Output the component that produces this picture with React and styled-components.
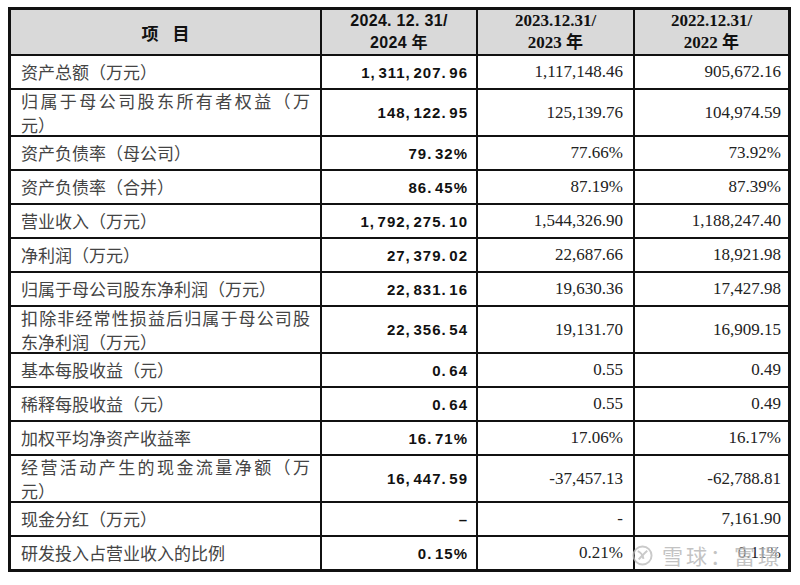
import React from 'react'
import styled, { createGlobalStyle } from 'styled-components'

const GlobalStyle = createGlobalStyle`
  html, body {
    margin: 0;
    padding: 0;
    background: #fff;
  }
`

const Page = styled.div`
  position: relative;
  width: 800px;
  height: 585px;
  padding: 7px 0 0 8px;
  box-sizing: border-box;
  overflow: hidden;
  background: #fff;
`

const Grid = styled.div`
  display: grid;
  width: 783px;
  box-sizing: border-box;
  grid-template-columns: 309px 154px 155px 153px;
  gap: 2px;
  background: #111;
  border: 3px solid #111;
`

const Cell = styled.div`
  display: flex;
  align-items: center;
  justify-content: ${p => p.align || 'flex-start'};
  box-sizing: border-box;
  height: ${p => p.head ? 44 : p.tall ? 45 : 32}px;
  padding: 0 ${p => p.pr || 10}px 0 10px;
  background: ${p => p.head ? '#d9d9d9' : '#fff'};
`

const Label = styled.div`
  width: 100%;
  font-family: "Noto Sans CJK SC", sans-serif;
  font-size: 17px;
  line-height: 24px;
  color: #444;
`

const FullLine = styled.span`
  display: block;
  text-align: justify;
  text-align-last: justify;
`

const Bold = styled.span`
  font-family: "Liberation Sans", "Noto Sans CJK SC", sans-serif;
  font-weight: 700;
  font-size: 15px;
  letter-spacing: 1px;
  word-spacing: -2.5px;
  color: #111;
`

const Plain = styled.span`
  font-family: "Liberation Serif", "Noto Sans CJK SC", serif;
  font-size: 17px;
  color: #222;
`

const HeadTitle = styled.span`
  font-family: "Noto Sans CJK SC", sans-serif;
  font-weight: 700;
  font-size: 17px;
  word-spacing: 10px;
  color: #111;
`

const HeadDate = styled.div`
  text-align: center;
  line-height: 22px;
  color: #111;
  font-weight: 700;
  font-family: ${p => p.sans
    ? '"Liberation Sans", "Noto Sans CJK SC", sans-serif'
    : '"Liberation Serif", "Noto Sans CJK SC", serif'};
  font-size: ${p => p.sans ? 16 : 17}px;
  letter-spacing: ${p => p.sans ? '0.3px' : '0'};
`

const Watermark = styled.div`
  position: absolute;
  left: 632px;
  top: 540px;
  display: flex;
  align-items: center;
  gap: 9px;
  opacity: 0.8;
  pointer-events: none;
`

const MarkText = styled.span`
  font-family: "Noto Sans CJK SC", sans-serif;
  font-size: 21px;
  letter-spacing: 3px;
  color: #b5b5b5;
  text-shadow: 0 0 2px #fff, 0 0 1px #fff;
`

const rows = [
  { label: '资产总额（万元）', a: '1, 311, 207. 96', b: '1,117,148.46', c: '905,672.16' },
  { label: ['归属于母公司股东所有者权益（万', '元）'], a: '148, 122. 95', b: '125,139.76', c: '104,974.59' },
  { label: '资产负债率（母公司）', a: '79. 32%', b: '77.66%', c: '73.92%' },
  { label: '资产负债率（合并）', a: '86. 45%', b: '87.19%', c: '87.39%' },
  { label: '营业收入（万元）', a: '1, 792, 275. 10', b: '1,544,326.90', c: '1,188,247.40' },
  { label: '净利润（万元）', a: '27, 379. 02', b: '22,687.66', c: '18,921.98' },
  { label: '归属于母公司股东净利润（万元）', a: '22, 831. 16', b: '19,630.36', c: '17,427.98' },
  { label: ['扣除非经常性损益后归属于母公司股', '东净利润（万元）'], a: '22, 356. 54', b: '19,131.70', c: '16,909.15' },
  { label: '基本每股收益（元）', a: '0. 64', b: '0.55', c: '0.49' },
  { label: '稀释每股收益（元）', a: '0. 64', b: '0.55', c: '0.49' },
  { label: '加权平均净资产收益率', a: '16. 71%', b: '17.06%', c: '16.17%' },
  { label: ['经营活动产生的现金流量净额（万', '元）'], a: '16, 447. 59', b: '-37,457.13', c: '-62,788.81' },
  { label: '现金分红（万元）', a: '–', b: '-', c: '7,161.90' },
  { label: '研发投入占营业收入的比例', a: '0. 15%', b: '0.21%', c: '0.11%' },
]

const SnowLogo = () => (
  <svg width="21" height="21" viewBox="0 0 22 22" fill="none" stroke="#bdbdbd" strokeWidth="2">
    <circle cx="11" cy="11" r="9.5" />
    <path d="M6 6.5c3 1 5 3.5 6 8" />
    <path d="M16 6c-2.5 2-5 5-9 9" />
  </svg>
)

const App = () => (
  <Page>
    <GlobalStyle />
    <Grid>
      <Cell head align="center"><HeadTitle>项 目</HeadTitle></Cell>
      <Cell head align="center">
        <HeadDate sans>2024. 12. 31/<br />2024&nbsp;年</HeadDate>
      </Cell>
      <Cell head align="center">
        <HeadDate>2023.12.31/<br />2023 年</HeadDate>
      </Cell>
      <Cell head align="center">
        <HeadDate>2022.12.31/<br />2022 年</HeadDate>
      </Cell>

      {rows.map((r, i) => {
        const tall = Array.isArray(r.label)
        return (
          <React.Fragment key={i}>
            <Cell tall={tall}>
              <Label>
                {tall ? (
                  <>
                    <FullLine>{r.label[0]}</FullLine>
                    {r.label[1]}
                  </>
                ) : r.label}
              </Label>
            </Cell>
            <Cell tall={tall} align="flex-end" pr={8}><Bold>{r.a}</Bold></Cell>
            <Cell tall={tall} align="flex-end" pr={10}><Plain>{r.b}</Plain></Cell>
            <Cell tall={tall} align="flex-end" pr={7}><Plain>{r.c}</Plain></Cell>
          </React.Fragment>
        )
      })}
    </Grid>

    <Watermark>
      <SnowLogo />
      <MarkText>雪球：富璟</MarkText>
    </Watermark>
  </Page>
)

export default App
